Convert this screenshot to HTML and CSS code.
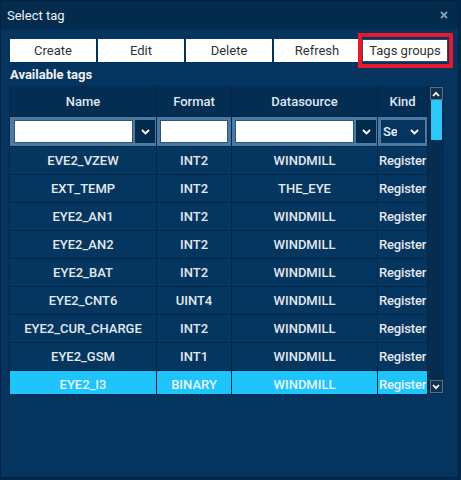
FILE: index.html
```html
<!DOCTYPE html>
<html>
<head>
<meta charset="utf-8">
<link rel="stylesheet" href="styles.css">
</head>
<body>
<div class="dialog">
  <div class="titlebar">
    <span class="title">Select tag</span>
    <span class="close">
      <svg width="8" height="8" viewBox="0 0 8 8"><path d="M1 1L7 7M7 1L1 7" stroke="#8d9cad" stroke-width="1.8" fill="none"/></svg>
    </span>
  </div>
  <div class="content">
    <div class="toolbar">
      <button class="btn">Create</button>
      <button class="btn">Edit</button>
      <button class="btn">Delete</button>
      <button class="btn">Refresh</button>
      <button class="btn focused">Tags groups<span class="highlight"></span></button>
    </div>
    <div class="section-label">Available tags</div>
    <div class="table-wrap">
      <div class="grid">
        <div class="hcell">Name</div>
        <div class="hcell">Format</div>
        <div class="hcell">Datasource</div>
        <div class="hcell">Kind</div>

        <div class="fcell fcell-name">
          <span class="finput finput-wide"></span>
          <span class="fdrop"><svg width="9" height="6" viewBox="0 0 9 6"><path d="M1 1L4.5 4.5L8 1" stroke="#fff" stroke-width="1.8" fill="none"/></svg></span>
        </div>
        <div class="fcell fcell-format"><span class="finput finput-full"></span></div>
        <div class="fcell fcell-ds">
          <span class="finput finput-wide"></span>
          <span class="fdrop"><svg width="9" height="6" viewBox="0 0 9 6"><path d="M1 1L4.5 4.5L8 1" stroke="#fff" stroke-width="1.8" fill="none"/></svg></span>
        </div>
        <div class="fcell fcell-kind">
          <span class="fselect"><span class="fselect-text">Se</span><svg width="9" height="6" viewBox="0 0 9 6"><path d="M1 1L4.5 4.5L8 1" stroke="#fff" stroke-width="1.8" fill="none"/></svg></span>
        </div>

        <div class="cell">EVE2_VZEW</div><div class="cell">INT2</div><div class="cell">WINDMILL</div><div class="cell kind">Register</div>
        <div class="cell">EXT_TEMP</div><div class="cell">INT2</div><div class="cell">THE_EYE</div><div class="cell kind">Register</div>
        <div class="cell">EYE2_AN1</div><div class="cell">INT2</div><div class="cell">WINDMILL</div><div class="cell kind">Register</div>
        <div class="cell">EYE2_AN2</div><div class="cell">INT2</div><div class="cell">WINDMILL</div><div class="cell kind">Register</div>
        <div class="cell">EYE2_BAT</div><div class="cell">INT2</div><div class="cell">WINDMILL</div><div class="cell kind">Register</div>
        <div class="cell">EYE2_CNT6</div><div class="cell">UINT4</div><div class="cell">WINDMILL</div><div class="cell kind">Register</div>
        <div class="cell">EYE2_CUR_CHARGE</div><div class="cell">INT2</div><div class="cell">WINDMILL</div><div class="cell kind">Register</div>
        <div class="cell">EYE2_GSM</div><div class="cell">INT1</div><div class="cell">WINDMILL</div><div class="cell kind">Register</div>
        <div class="cell sel">EYE2_I3</div><div class="cell sel">BINARY</div><div class="cell sel">WINDMILL</div><div class="cell kind sel">Register</div>
      </div>
      <div class="scrollbar">
        <span class="sb-btn"><svg width="8" height="6" viewBox="0 0 8 6"><path d="M1 5L4 1.8L7 5" stroke="#fff" stroke-width="1.8" fill="none"/></svg></span>
        <span class="sb-thumb"></span>
        <span class="sb-space"></span>
        <span class="sb-btn"><svg width="8" height="6" viewBox="0 0 8 6"><path d="M1 1L4 4.2L7 1" stroke="#fff" stroke-width="1.8" fill="none"/></svg></span>
      </div>
    </div>
  </div>
</div>
</body>
</html>
```

FILE: styles.css
```css
* { box-sizing: border-box; }
html, body {
  margin: 0;
  padding: 0;
  background: #03284a;
  font-family: Roboto, "Liberation Sans", Arial, sans-serif;
}
.dialog {
  width: 459px;
  height: 478px;
  border: 1px solid #022341;
  background: #05355f;
  display: flex;
  flex-direction: column;
}
.titlebar {
  height: 28px;
  background: #032b4e;
  display: flex;
  align-items: center;
  justify-content: space-between;
  padding: 0 10px 0 6px;
  flex-shrink: 0;
}
.title {
  color: #eef2f6;
  font-size: 13px;
}
.close {
  display: flex;
  align-items: center;
  margin-top: -1px;
}
.content {
  padding: 10px 0 0 8px;
}
.toolbar {
  display: flex;
  gap: 2px;
  margin-left: 1px;
}
.btn {
  width: 86px;
  height: 23px;
  border: 0;
  background: #ffffff;
  color: #303236;
  font-family: Roboto, "Liberation Sans", Arial, sans-serif;
  font-size: 13px;
  padding: 0;
  position: relative;
}
.btn.focused {
  border: 1px solid #3a4656;
}
.highlight {
  position: absolute;
  top: -7px;
  bottom: -7px;
  left: -5px;
  right: -6px;
  border: 4px solid #e8192c;
}
.section-label {
  margin: 2px 0 0 1px;
  height: 22px;
  line-height: 21px;
  color: #eef2f6;
  font-weight: 700;
  font-size: 13px;
}
.table-wrap {
  display: flex;
  height: 308px;
  width: 435px;
  border-left: 1px solid #022749;
  background: #022749;
  gap: 1px;
  overflow: hidden;
}
.grid {
  display: grid;
  grid-template-columns: 146px 74px 145px 49px;
  grid-template-rows: 30px 29px;
  grid-auto-rows: 27px;
  gap: 1px;
  background: #022749;
  align-content: start;
}
.hcell {
  background: #032d52;
  color: #dfe7ef;
  font-size: 13px;
  font-weight: 500;
  display: flex;
  align-items: center;
  justify-content: center;
}
.fcell {
  background: #4b7aa3;
  display: flex;
  align-items: center;
  gap: 2px;
}
.fcell-name { padding: 0 1px 0 4px; }
.fcell-format { padding: 0 3px; }
.fcell-ds { padding: 0 1px 0 3px; }
.fcell-kind { padding: 0 2px 0 3px; }
.finput {
  height: 23px;
  background: #ffffff;
  border: 1px solid #2e5578;
  display: block;
}
.finput-wide { flex: 1; }
.finput-full { flex: 1; }
.fdrop {
  width: 20px;
  height: 23px;
  background: #032b4e;
  display: flex;
  align-items: center;
  justify-content: center;
  flex-shrink: 0;
}
.fselect {
  flex: 1;
  height: 23px;
  background: #05355f;
  display: flex;
  align-items: center;
  justify-content: space-between;
  padding: 0 6px 0 2px;
  overflow: hidden;
}
.fselect-text {
  color: #eef2f6;
  font-size: 13px;
  font-weight: 500;
  width: 14px;
  overflow: hidden;
  white-space: nowrap;
}
.cell {
  background: #05365f;
  color: #e3e8ee;
  font-size: 13px;
  font-weight: 500;
  display: flex;
  align-items: center;
  justify-content: center;
  white-space: nowrap;
  overflow: hidden;
}
.cell.kind {
  justify-content: flex-start;
  padding-left: 1px;
  letter-spacing: -0.15px;
}
.cell.sel {
  background: #1fc4fa;
  color: #e8f3fa;
}
.scrollbar {
  width: 16px;
  background: #052d50;
  display: flex;
  flex-direction: column;
  align-items: center;
  padding: 1px 0 1px 0;
}
.sb-btn {
  width: 13px;
  height: 13px;
  background: #13314f;
  border: 1px solid #5a6e84;
  display: flex;
  align-items: center;
  justify-content: center;
  flex-shrink: 0;
}
.sb-thumb {
  width: 11px;
  height: 40px;
  background: #2ec8f8;
  margin-top: 0;
  flex-shrink: 0;
}
.sb-space { flex: 1; }
```
